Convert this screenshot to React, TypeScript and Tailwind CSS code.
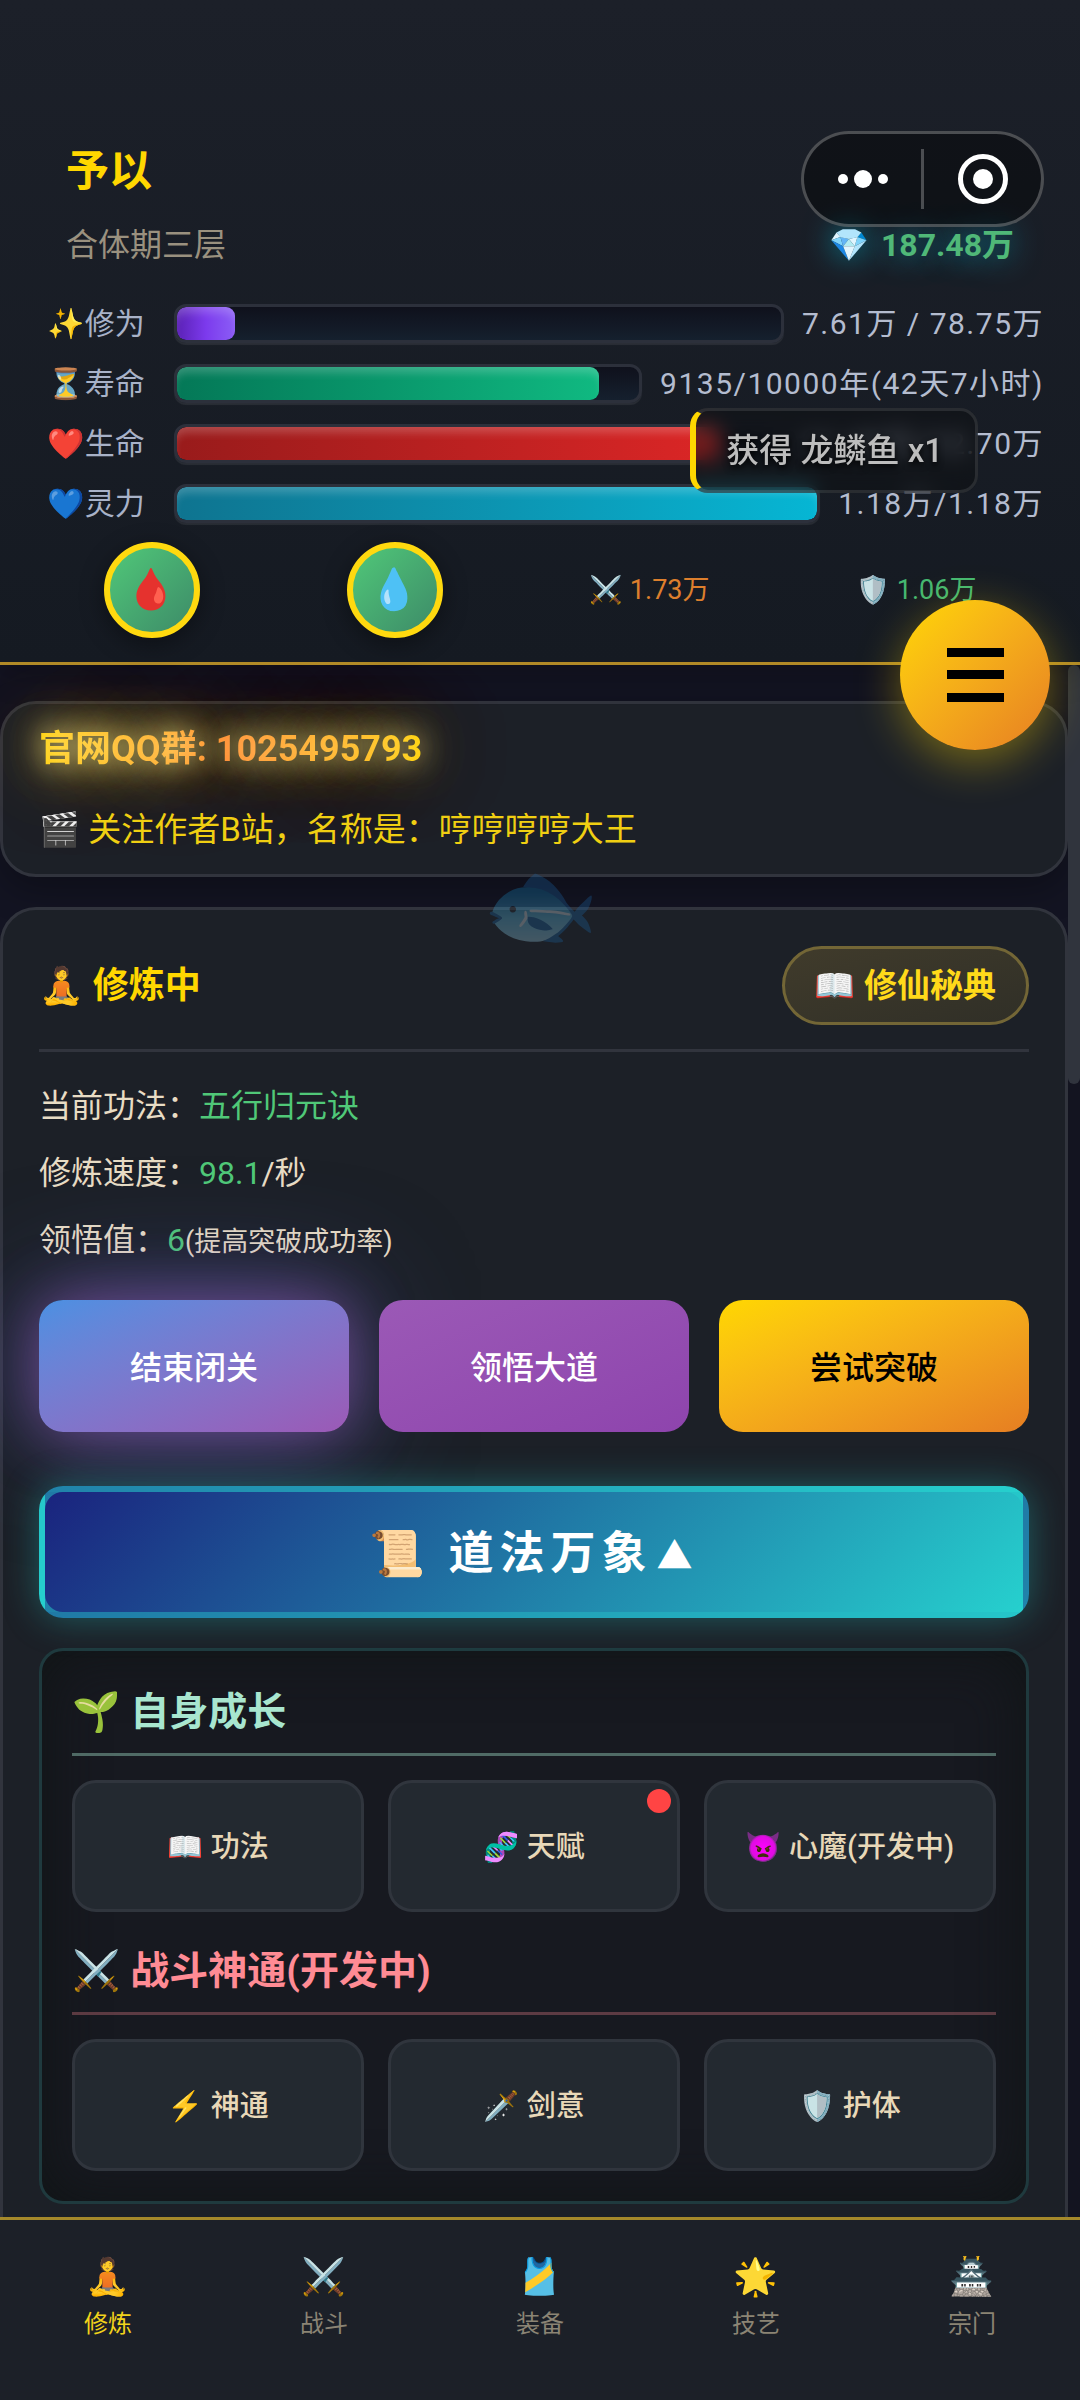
import React from 'react';
import { clsx } from 'clsx';

interface Stat {
  icon: string;
  label: string;
  value: string;
  percent: number;
  fill: string;
}

const STATS: Stat[] = [
  { icon: '✨', label: '修为', value: '7.61万 / 78.75万', percent: 9.66, fill: 'from-[#5b21b6] via-[#7c3aed] to-[#8b5cf6]' },
  { icon: '⏳', label: '寿命', value: '9135/10000年(42天7小时)', percent: 91.35, fill: 'from-[#047857] to-[#10b981]' },
  { icon: '❤️', label: '生命', value: '11.43万/12.70万', percent: 90, fill: 'from-[#991b1b] to-[#dc2626]' },
  { icon: '💙', label: '灵力', value: '1.18万/1.18万', percent: 100, fill: 'from-[#0e7490] to-[#06b6d4]' },
];

const SECTIONS = [
  {
    icon: '🌱',
    title: '自身成长',
    color: 'text-[#a8e6cf] border-[#a8e6cf]/40',
    items: [
      { icon: '📖', label: '功法' },
      { icon: '🧬', label: '天赋', dot: true },
      { icon: '👿', label: '心魔(开发中)' },
    ],
  },
  {
    icon: '⚔️',
    title: '战斗神通(开发中)',
    color: 'text-[#ff8b94] border-[#ff8b94]/30',
    items: [
      { icon: '⚡', label: '神通' },
      { icon: '🗡️', label: '剑意' },
      { icon: '🛡️', label: '护体' },
    ],
  },
];

const TABS = [
  { icon: '🧘', label: '修炼' },
  { icon: '⚔️', label: '战斗' },
  { icon: '🎽', label: '装备' },
  { icon: '🌟', label: '技艺' },
  { icon: '🏯', label: '宗门' },
];

const StatRow: React.FC<{ stat: Stat }> = ({ stat }) => (
  <div className="flex items-center gap-[18px] h-[39px] text-[30px] leading-[39px] whitespace-nowrap">
    <span className="w-[120px] shrink-0 text-center text-[#a8b2c8]">{stat.icon}{stat.label}</span>
    <div className="flex-1 h-[39px] rounded-xl border-[3px] border-[#2c303b] bg-linear-to-b from-[#0f111c] to-[#15202e] shadow-[0_2px_1px_rgba(255,255,255,0.08)] overflow-hidden">
      <div
        className={clsx('h-full rounded-[9px] bg-linear-to-r shadow-[inset_0_9px_9px_-3px_rgba(255,255,255,0.2)]', stat.fill)}
        style={{ width: `${stat.percent}%` }}
      />
    </div>
    <span className="tracking-wider text-[#b4bccf]">{stat.value}</span>
  </div>
);

const Header: React.FC = () => (
  <header className="relative z-10 shrink-0 px-9 pt-[141px] pb-6 border-b-[3px] border-[#b18a27] bg-linear-to-b from-[#1c2029] to-[#151a22] shadow-[0_6px_30px_rgba(0,0,0,0.25)]">
    <div className="px-[30px]">
      <h1 className="text-[43px] leading-[60px] font-bold text-[#ffd700]">予以</h1>
      <div className="mt-5 flex items-center justify-between text-[32px] leading-[48px]">
        <span className="text-[#9a917f]">合体期三层</span>
        <span className="flex gap-3 font-bold text-[#50b878] [text-shadow:0_0_30px_rgba(0,190,220,0.7)]">
          <span>💎</span>
          <span>187.48万</span>
        </span>
      </div>
    </div>
    <div className="mt-[35px] flex flex-col gap-[21px]">
      {STATS.map((stat) => <StatRow key={stat.label} stat={stat} />)}
    </div>
    <div className="mt-[19px] flex items-center justify-around gap-3 text-[27px]">
      <button aria-label="恢复生命" className="size-24 rounded-full border-[6px] border-[#ffd90f] bg-linear-to-br from-[#50c878] to-[#3d8b68] text-[40px] leading-none shadow-[0_6px_24px_rgba(0,0,0,0.4)]">🩸</button>
      <button aria-label="恢复灵力" className="size-24 rounded-full border-[6px] border-[#ffd90f] bg-linear-to-br from-[#50c878] to-[#3d8b68] text-[40px] leading-none shadow-[0_6px_24px_rgba(0,0,0,0.4)]">💧</button>
      <span className="text-[#dd7f2d]">⚔️ 1.73万</span>
      <span className="text-[#45b871]">🛡️ 1.06万</span>
    </div>

    {/* host app capsule */}
    <div className="absolute top-[131px] right-9 flex items-center w-[243px] h-24 rounded-full border-[3px] border-white/25 bg-black/40">
      <button aria-label="更多" className="flex-1 flex justify-center">
        <svg width="52" height="20" viewBox="0 0 52 20" fill="#fff">
          <circle cx="6" cy="10" r="5" />
          <circle cx="26" cy="10" r="9" />
          <circle cx="46" cy="10" r="5" />
        </svg>
      </button>
      <div className="w-[3px] h-[60px] bg-white/25" />
      <button aria-label="关闭" className="flex-1 flex justify-center">
        <svg width="52" height="52" viewBox="0 0 52 52">
          <circle cx="26" cy="26" r="22.5" fill="none" stroke="#fff" strokeWidth="5" />
          <circle cx="26" cy="26" r="10" fill="#fff" />
        </svg>
      </button>
    </div>

    {/* loot toast */}
    <div className="absolute top-[408px] right-[102px] pl-[30px] pr-8 py-[18px] rounded-[18px] border-[3px] border-l-[6px] border-white/10 border-l-[#ffd700] bg-[#0c0d10]/50 backdrop-blur-[10px] text-[33px] leading-[43px] font-medium text-[#bdbdbd] whitespace-nowrap [text-shadow:0_3px_6px_#000]">
      获得 龙鳞鱼 x1
    </div>

    <button aria-label="菜单" className="absolute top-[600px] right-[30px] size-[150px] rounded-full flex items-center justify-center bg-linear-to-br from-[#ffd700] to-[#e67e22] shadow-[0_12px_45px_rgba(255,215,0,0.4)]">
      <svg width="57" height="54" viewBox="0 0 57 54">
        <path d="M0 0h57v9H0zM0 22h57v9H0zM0 45h57v9H0z" fill="#000" />
      </svg>
    </button>
  </header>
);

const Notice: React.FC = () => (
  <section className="px-9 pt-[18px] pb-5 rounded-[36px] border-[3px] border-[#31343d] bg-[#1c2027] shadow-[0_12px_36px_rgba(0,0,0,0.3)]">
    <p className="w-fit bg-linear-to-r from-[#ffd700] via-[#ff8c42] to-[#ffd700] bg-clip-text text-[36px] leading-[54px] font-bold text-transparent [text-shadow:0_0_24px_rgba(255,240,150,0.5),0_0_36px_rgba(255,240,150,0.6),0_0_60px_rgba(255,215,0,0.7),0_0_90px_rgba(255,140,0,0.6)]">
      官网QQ群: 1025495793
    </p>
    <p className="mt-[30px] text-[33px] leading-[48px] text-[#f0cf12]">🎬 关注作者B站，名称是：哼哼哼哼大王</p>
  </section>
);

const Panel: React.FC = () => (
  <div className="mt-[30px] p-[30px] pt-8 flex flex-col gap-[30px] rounded-3xl border-[3px] border-[#1f3a3e] bg-[#171920] shadow-[inset_0_0_60px_rgba(16,20,20,0.9)]">
    {SECTIONS.map((section) => (
      <div key={section.title}>
        <h3 className={clsx('pb-3 border-b-[3px] text-[39px] leading-[58px] font-bold', section.color)}>
          {section.icon} {section.title}
        </h3>
        <div className="mt-6 grid grid-cols-3 gap-6">
          {section.items.map((item) => (
            <button key={item.label} className="relative h-[132px] pt-1 rounded-3xl border-[3px] border-[#30353d] bg-[#232930] text-[29px] font-medium text-[#e8d8b8]">
              {item.icon} {item.label}
              {item.dot && <span className="absolute top-1.5 right-1.5 size-6 rounded-full bg-[#ff4444]" />}
            </button>
          ))}
        </div>
      </div>
    ))}
  </div>
);

const Cultivation: React.FC = () => (
  <section className="mt-[30px] px-9 pt-9 pb-14 rounded-[36px] border-[3px] border-[#31343d] bg-[#1c2027]">
    <div className="flex items-center justify-between pb-6 border-b-[3px] border-[#31343d]">
      <h2 className="text-[36px] font-bold text-[#ffd700]">🧘 修炼中</h2>
      <button className="h-[79px] px-[30px] rounded-full border-[3px] border-[#736636] bg-linear-to-br from-[#403b2b] to-[#302f27] text-[33px] font-bold text-[#ffd91a]">
        📖 修仙秘典
      </button>
    </div>
    <div className="pt-[22px] flex flex-col gap-[3px] text-[32px] leading-[64px] text-[#e8dcc4]">
      <p>当前功法：<span className="text-[#50c878]">五行归元诀</span></p>
      <p>修炼速度：<span className="text-[#50c878]">98.1</span>/秒</p>
      <p>领悟值：<span className="text-[#50c878]">6</span><span className="text-[27px]">(提高突破成功率)</span></p>
    </div>
    <div className="mt-[26px] grid grid-cols-3 gap-[30px] text-[32px] font-medium">
      <button className="h-[132px] pt-1 rounded-3xl bg-linear-to-br from-[#4a90e2] to-[#9b59b6] text-white shadow-[0_0_60px_rgba(155,89,182,0.6),0_0_120px_rgba(90,110,220,0.5)]">结束闭关</button>
      <button className="h-[132px] pt-1 rounded-3xl bg-linear-to-br from-[#9b59b6] to-[#8e44ad] text-white">领悟大道</button>
      <button className="h-[132px] pt-1 rounded-3xl bg-linear-to-br from-[#ffd700] to-[#e67e22] text-black">尝试突破</button>
    </div>
    <button className="mt-[54px] w-full h-[132px] pt-1 rounded-3xl border-[6px] border-[#26d0ce]/50 bg-linear-[135deg] from-[#1a237e] to-[#26d0ce] text-[45px] font-bold tracking-[6px] text-white shadow-[0_0_36px_rgba(38,208,206,0.35)]">
      📜 道法万象<span className="ml-1 text-[36px]">▲</span>
    </button>
    <Panel />
  </section>
);

const TabBar: React.FC = () => (
  <nav className="relative z-10 shrink-0 grid grid-cols-5 pt-[30px] pb-14 border-t-[3px] border-[#a5892b] bg-[#1c2028]">
    {TABS.map((tab, i) => (
      <a key={tab.label} href="#" className={clsx('flex flex-col items-center', i === 0 ? 'text-[#f2d31b]' : 'text-[#8b8474]')}>
        <span className="text-[36px] leading-[54px]">{tab.icon}</span>
        <span className="text-[24px] leading-10">{tab.label}</span>
      </a>
    ))}
  </nav>
);

const App: React.FC = () => (
  <div className="h-screen flex flex-col overflow-hidden bg-[#131422] font-[Roboto,'Noto_Sans_CJK_SC','Noto_Color_Emoji',sans-serif]">
    <Header />
    <main className="flex-1 min-h-0 flex">
      <div className="relative flex-1 min-w-0 overflow-hidden pt-9">
        <Notice />
        <Cultivation />
        <span className="absolute top-[180px] left-[482px] text-[94px] leading-[120px] opacity-30" aria-hidden="true">🐟</span>
      </div>
      <div className="w-3 shrink-0 bg-[#131420]">
        <div className="h-[27%] rounded-full bg-[#30343d]" />
      </div>
    </main>
    <TabBar />
  </div>
);

export default App;
